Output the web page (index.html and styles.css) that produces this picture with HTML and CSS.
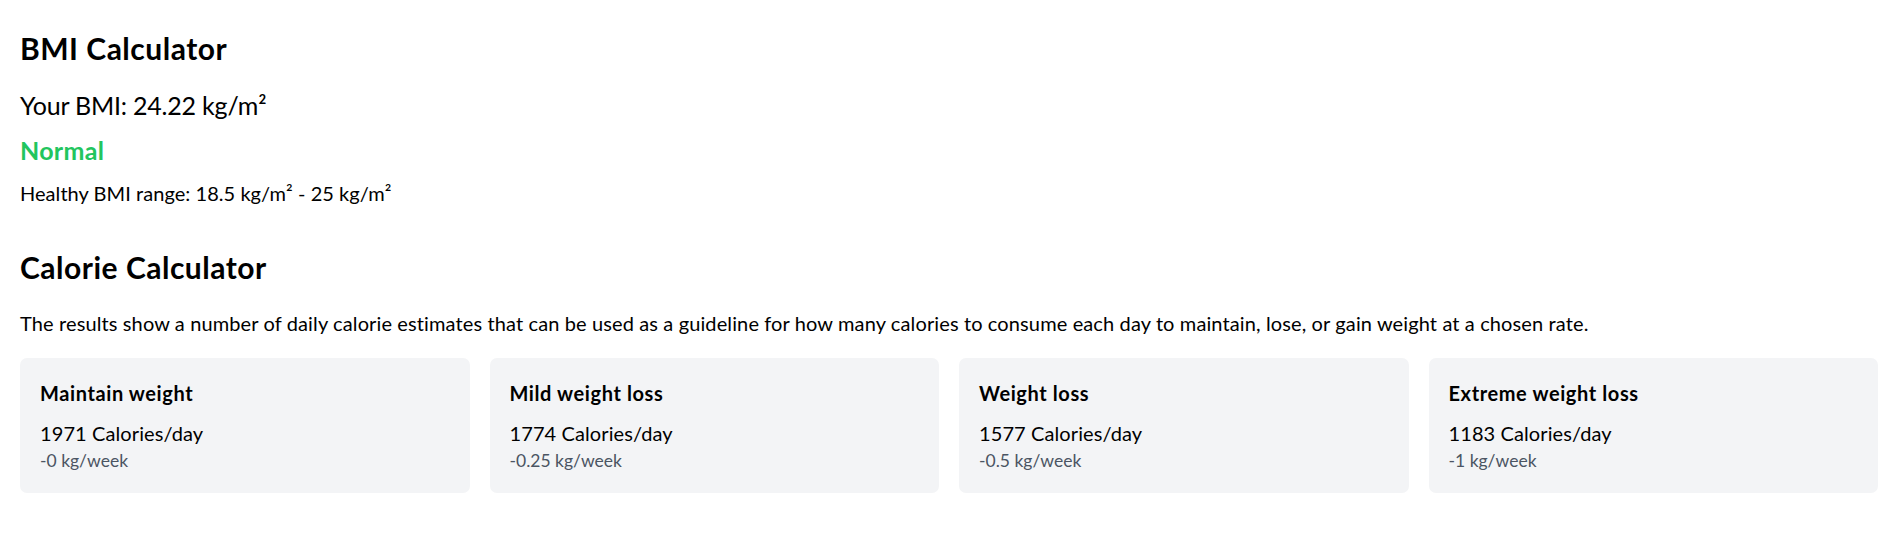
FILE: index.html
```html
<!DOCTYPE html>
<html lang="en">
<head>
<meta charset="utf-8">
<title>BMI Calculator</title>
<link rel="stylesheet" href="styles.css">
</head>
<body>
<main class="page">
  <section class="bmi">
    <h2 class="section-title">BMI Calculator</h2>
    <p class="bmi-value">Your BMI: 24.22 kg/m²</p>
    <p class="bmi-status">Normal</p>
    <p class="bmi-range">Healthy BMI range: 18.5 kg/m² - 25 kg/m²</p>
  </section>
  <section class="calories">
    <h2 class="section-title">Calorie Calculator</h2>
    <p class="calories-desc">The results show a number of daily calorie estimates that can be used as a guideline for how many calories to consume each day to maintain, lose, or gain weight at a chosen rate.</p>
    <div class="cards">
      <div class="card">
        <h3 class="card-title">Maintain weight</h3>
        <p class="card-cal">1971 Calories/day</p>
        <p class="card-rate">-0 kg/week</p>
      </div>
      <div class="card">
        <h3 class="card-title">Mild weight loss</h3>
        <p class="card-cal">1774 Calories/day</p>
        <p class="card-rate">-0.25 kg/week</p>
      </div>
      <div class="card">
        <h3 class="card-title">Weight loss</h3>
        <p class="card-cal">1577 Calories/day</p>
        <p class="card-rate">-0.5 kg/week</p>
      </div>
      <div class="card">
        <h3 class="card-title">Extreme weight loss</h3>
        <p class="card-cal">1183 Calories/day</p>
        <p class="card-rate">-1 kg/week</p>
      </div>
    </div>
  </section>
</main>
</body>
</html>
```
FILE: styles.css
```css
* { box-sizing: border-box; }
html, body { margin: 0; padding: 0; background: #ffffff; }
body {
  font-family: "Lato", "Noto Sans", sans-serif;
  color: #000000;
  letter-spacing: 0.12px;
}
h2, h3, p { margin: 0; }

.page {
  padding: 28px 20px 20px 20px;
}

.section-title {
  font-size: 30px;
  line-height: 40px;
  font-weight: 700;
  letter-spacing: 0.5px;
}

.bmi-value {
  margin-top: 20px;
  font-size: 25px;
  line-height: 35px;
  letter-spacing: -0.2px;
}

.bmi-status {
  margin-top: 10px;
  font-size: 25px;
  line-height: 35px;
  font-weight: 700;
  color: #22c55e;
  letter-spacing: 0.3px;
}

.bmi-range {
  margin-top: 10px;
  font-size: 20px;
  line-height: 30px;
  letter-spacing: 0.05px;
}

.calories { margin-top: 39px; }

.calories-desc {
  margin-top: 21px;
  font-size: 20px;
  line-height: 30px;
}

.cards {
  margin-top: 20px;
  display: grid;
  grid-template-columns: repeat(4, 1fr);
  gap: 20px;
}

.card {
  background: #f3f4f6;
  border-radius: 7px;
  padding: 20px;
}

.card-title {
  font-size: 20px;
  line-height: 30px;
  font-weight: 700;
  letter-spacing: 0.6px;
}

.card-cal {
  margin-top: 10px;
  font-size: 20px;
  line-height: 30px;
  letter-spacing: 0.1px;
}

.card-rate {
  font-size: 17.5px;
  line-height: 25px;
  color: #4b5563;
  letter-spacing: 0;
}
```
